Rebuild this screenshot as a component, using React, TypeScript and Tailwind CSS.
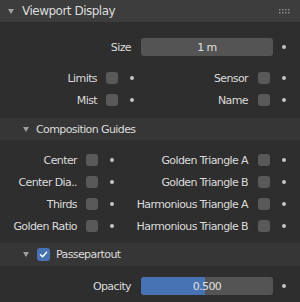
import { ReactNode } from 'react';

const Dot = () => <span className="block w-[4px] h-[4px] rounded-full bg-[#c4c4c4] shrink-0" />;

function Check({ on = false }: { on?: boolean }) {
    if (on) {
        return (
            <span className="flex items-center justify-center w-[13px] h-[13px] rounded-[3px] bg-[#4772b3] shrink-0">
                <svg width="9" height="9" viewBox="0 0 9 9">
                    <path d="M1.5 4.8 L3.6 6.8 L7.6 2.2" fill="none" stroke="#ffffff" strokeWidth="1.5" strokeLinecap="round" strokeLinejoin="round" />
                </svg>
            </span>
        );
    }
    return <span className="block w-[12px] h-[12px] rounded-[3px] bg-[#595959] shrink-0" />;
}

const Arrow = () => (
    <svg width="6" height="5" viewBox="0 0 6 5" className="shrink-0">
        <path d="M0 0 L6 0 L3 5 Z" fill="#a0a0a0" />
    </svg>
);

// one half of a row: label, checkbox, animate dot
function Prop({ label, w }: { label: string; w: string }) {
    return (
        <div className="flex items-center">
            <span className={`${w} text-right whitespace-nowrap`}>{label}</span>
            <span className="ml-[9px]"><Check /></span>
            <span className="ml-[12px]"><Dot /></span>
        </div>
    );
}

function Pair({ left, right, leftW, leftBox }: { left: string; right: string; leftW: string; leftBox: string }) {
    return (
        <div className="flex items-center h-[22px]">
            <div className={leftBox}>
                <Prop label={left} w={leftW} />
            </div>
            <div className="flex-1 flex items-center justify-end pr-[14px]">
                <span className="whitespace-nowrap">{right}</span>
                <span className="ml-[10px]"><Check /></span>
                <span className="ml-[12px]"><Dot /></span>
            </div>
        </div>
    );
}

function Field({ label, children }: { label: string; children: ReactNode }) {
    return (
        <div className="flex items-center h-[22px]">
            <span className="w-[131px] text-right">{label}</span>
            <div className="ml-[10px] w-[132px] h-[18px] rounded-[3px] bg-[#545454] relative overflow-hidden">
                {children}
            </div>
            <span className="ml-[9px]"><Dot /></span>
        </div>
    );
}

export default function App() {
    return (
        <div className="w-[300px] h-[302px] bg-[#2e2e2e] overflow-hidden text-[#dcdcdc] text-[11px] tracking-[-0.6px] leading-none" style={{ fontFamily: '"DejaVu Sans", sans-serif' }}>
            <header className="h-[22px] bg-[#3d3d3d] flex items-center pl-[8px] pr-[10px]">
                <Arrow />
                <span className="ml-[8px] text-[12px] tracking-[-0.5px]">Viewport Display</span>
                <svg width="11" height="5" viewBox="0 0 11 5" className="ml-auto">
                    {[0, 3, 6, 9].map((x) => (
                        <g key={x} fill="#8a8a8a">
                            <rect x={x} y="0" width="1.5" height="1.5" />
                            <rect x={x} y="3" width="1.5" height="1.5" />
                        </g>
                    ))}
                </svg>
            </header>

            <section className="pt-[14px]">
                <Field label="Size">
                    <span className="absolute inset-0 flex items-center justify-center text-[#e0e0e0]">1 m</span>
                </Field>
                <div className="mt-[9px]">
                    <Pair left="Limits" right="Sensor" leftW="w-[97px]" leftBox="w-[140px]" />
                    <Pair left="Mist" right="Name" leftW="w-[97px]" leftBox="w-[140px]" />
                </div>
            </section>

            <div className="mt-[7px] h-[22px] bg-[#363636] flex items-center pl-[23px]">
                <Arrow />
                <span className="ml-[7px]">Composition Guides</span>
            </div>

            <section className="pt-[9px]">
                <Pair left="Center" right="Golden Triangle A" leftW="w-[77px]" leftBox="w-[120px]" />
                <Pair left="Center Dia.." right="Golden Triangle B" leftW="w-[77px]" leftBox="w-[120px]" />
                <Pair left="Thirds" right="Harmonious Triangle A" leftW="w-[77px]" leftBox="w-[120px]" />
                <Pair left="Golden Ratio" right="Harmonious Triangle B" leftW="w-[77px]" leftBox="w-[120px]" />
            </section>

            <div className="mt-[6px] h-[23px] bg-[#363636] flex items-center pl-[23px]">
                <Arrow />
                <span className="ml-[8px]"><Check on /></span>
                <span className="ml-[6px]">Passepartout</span>
            </div>

            <section className="pt-[9px]">
                <Field label="Opacity">
                    <div className="absolute left-0 top-0 bottom-0 w-[64px] bg-[#4772b3]" />
                    <span className="absolute inset-0 flex items-center justify-center text-[#e0e0e0]">0.500</span>
                </Field>
            </section>
        </div>
    );
}
